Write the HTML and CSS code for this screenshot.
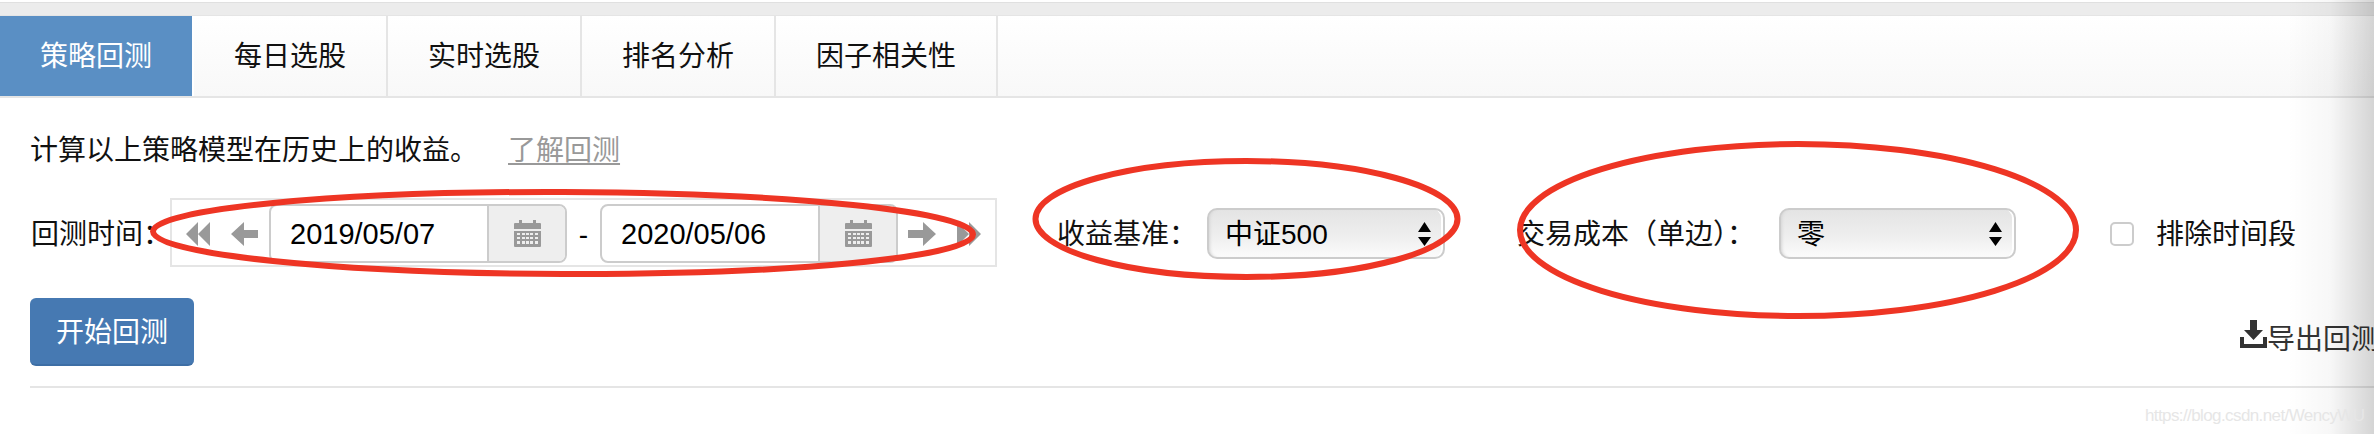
FILE: index.html
```html
<!DOCTYPE html>
<html lang="en">
<head>
    <meta charset="UTF-8">
    <meta name="viewport" content="width=device-width, initial-scale=1.0">
    <title>策略回测</title>
    <link rel="stylesheet" href="styles.css">
</head>
<body>
    <div class="top-strip"></div>
    <div class="tabs">
        <div class="tab active">策略回测</div>
        <div class="tab">每日选股</div>
        <div class="tab">实时选股</div>
        <div class="tab">排名分析</div>
        <div class="tab wide">因子相关性</div>
    </div>

    <div class="content">
        <div class="intro">计算以上策略模型在历史上的收益。<a class="learn-link" href="#">了解回测</a></div>

        <div class="form-row">
            <div class="field-label date-label">回测时间：</div>
            <div class="date-box">
                <svg class="nav-icon first" width="24" height="24" viewBox="0 0 24 24"><path d="M12 0V24L0 12ZM24 0V24L12 12Z"/></svg>
                <svg class="nav-icon second" width="27" height="24" viewBox="0 0 27 24"><path d="M13 0V8H27V16H13V24L0 12Z"/></svg>
                <div class="date-input">
                    <span class="date-value">2019/05/07</span>
                    <span class="date-addon">
                        <svg width="27" height="27" viewBox="0 0 27 27"><path d="M0 9V4Q0 3 1 3H5V0H8V3H19V0H22V3H26Q27 3 27 4V9ZM0 11H27V26Q27 27 26 27H1Q0 27 0 26ZM3 13V15H6V13ZM8 13V15H11V13ZM12 13V15H15V13ZM16 13V15H19V13ZM21 13V15H24V13ZM3 17V19H6V17ZM8 17V19H11V17ZM12 17V19H15V17ZM16 17V19H19V17ZM21 17V19H24V17ZM3 21V24H6V21ZM8 21V24H11V21ZM12 21V24H15V21ZM16 21V24H19V21ZM21 21V24H24V21Z" fill-rule="evenodd"/></svg>
                    </span>
                </div>
                <div class="date-dash">-</div>
                <div class="date-input">
                    <span class="date-value">2020/05/06</span>
                    <span class="date-addon">
                        <svg width="27" height="27" viewBox="0 0 27 27"><path d="M0 9V4Q0 3 1 3H5V0H8V3H19V0H22V3H26Q27 3 27 4V9ZM0 11H27V26Q27 27 26 27H1Q0 27 0 26ZM3 13V15H6V13ZM8 13V15H11V13ZM12 13V15H15V13ZM16 13V15H19V13ZM21 13V15H24V13ZM3 17V19H6V17ZM8 17V19H11V17ZM12 17V19H15V17ZM16 17V19H19V17ZM21 17V19H24V17ZM3 21V24H6V21ZM8 21V24H11V21ZM12 21V24H15V21ZM16 21V24H19V21ZM21 21V24H24V21Z" fill-rule="evenodd"/></svg>
                    </span>
                </div>
                <svg class="nav-icon third" width="28" height="24" viewBox="0 0 28 24"><path d="M15 0V8H0V16H15V24L28 12Z"/></svg>
                <svg class="nav-icon fourth" width="24" height="24" viewBox="0 0 24 24"><path d="M0 0V24L12 12ZM12 0V24L24 12Z"/></svg>
            </div>

            <div class="field-label benchmark-label">收益基准：</div>
            <div class="picker benchmark-picker">
                <span>中证500</span>
                <svg width="13" height="24" viewBox="0 0 13 24"><path d="M6.5 0L13 10H0ZM0 15H13L6.5 24Z"/></svg>
            </div>

            <div class="field-label cost-label">交易成本（单边）：</div>
            <div class="picker cost-picker">
                <span>零</span>
                <svg width="13" height="24" viewBox="0 0 13 24"><path d="M6.5 0L13 10H0ZM0 15H13L6.5 24Z"/></svg>
            </div>

            <div class="check-box"></div>
            <div class="field-label check-label">排除时间段</div>
        </div>

        <div class="action-row">
            <button class="start-button">开始回测</button>
            <div class="export-link">
                <svg width="27" height="28" viewBox="0 0 27 28"><path d="M10 0H17V10H23L13.5 20L4 10H10ZM0 17H4V24H23V17H27V28H0Z"/></svg>
                <span>导出回测</span>
            </div>
        </div>

        <div class="divider"></div>
    </div>

    <!-- hand drawn annotations on top of the screenshot -->
    <svg class="annotations" width="2374" height="434" viewBox="0 0 2374 434">
        <ellipse cx="563" cy="233" rx="410" ry="41" transform="rotate(0.2 563 233)"/>
        <ellipse cx="1246.5" cy="219" rx="211" ry="58"/>
        <ellipse cx="1798" cy="230" rx="278" ry="86"/>
    </svg>
    <div class="page-shade"></div>
    <div class="watermark">https://blog.csdn.net/WencyWU</div>
</body>
</html>
```

FILE: styles.css
```css
html, body {
    margin: 0;
    padding: 0;
}
body {
    position: relative;
    width: 2374px;
    height: 434px;
    overflow: hidden;
    padding-top: 2px;
    box-sizing: border-box;
    background-color: #fff;
    color: #111;
    font-family: "Liberation Sans", "Noto Sans CJK SC", sans-serif;
    font-size: 28px;
    line-height: 40px;
}
.top-strip {
    height: 12px;
    background-color: #ececec;
    border-top: 1px solid #e0e0e0;
    border-bottom: 1px solid #e5e5e5;
}
.tabs {
    display: flex;
    height: 80px;
    background: linear-gradient(#fff, #f8f8f8);
    border-bottom: 2px solid #e5e5e5;
}
.tab {
    width: 192px;
    display: flex;
    justify-content: center;
    align-items: center;
    padding-top: 2px;
    box-sizing: content-box;
    border-right: 2px solid #e5e5e5;
}
.tab.wide {
    width: 220px;
}
.tab.active {
    background-color: #5a8fc4;
    color: #fff;
    border-right-color: #fff;
}
.content {
    width: 2390px;
    padding: 33px 0 0 30px;
    box-sizing: border-box;
}
.learn-link {
    margin-left: 30px;
    color: #999;
    text-decoration: underline;
    text-underline-offset: 3px;
}
.form-row {
    display: flex;
    align-items: center;
    margin-top: 27px;
    height: 69px;
}
.field-label {
    padding-top: 5px;
    white-space: nowrap;
}
.date-label {
    width: 139px;
    margin-left: 1px;
}
.date-box {
    display: flex;
    align-items: center;
    width: 827px;
    height: 69px;
    padding-top: 2px;
    box-sizing: border-box;
    border: 2px solid #e5e5e5;
}
.nav-icon {
    flex: none;
    fill: #999;
}
.nav-icon.first {
    margin-left: 14px;
}
.nav-icon.second {
    margin: 0 11px 0 21px;
}
.nav-icon.third {
    margin: 0 21px 0 10px;
}
.date-input {
    display: flex;
    width: 298px;
    height: 59px;
    box-sizing: border-box;
    border: 2px solid #ccc;
    border-radius: 8px;
    overflow: hidden;
}
.date-value {
    flex: 1;
    padding-left: 19px;
    font-size: 29px;
    line-height: 57px;
    color: #000;
}
.date-addon {
    display: flex;
    justify-content: center;
    align-items: center;
    width: 76px;
    background-color: #eee;
    border-left: 2px solid #ccc;
    fill: #999;
}
.date-dash {
    width: 33px;
    padding-top: 2px;
    text-align: center;
    color: #000;
}
.benchmark-label {
    width: 150px;
    margin-left: 60px;
}
.cost-label {
    width: 262px;
    margin-left: 72px;
}
.picker {
    display: flex;
    justify-content: space-between;
    align-items: center;
    height: 51px;
    margin-top: 2px;
    padding: 0 12px 0 16px;
    box-sizing: border-box;
    border: 2px solid #ccc;
    border-radius: 10px;
    background: linear-gradient(#e4e4e4, #eee 55%, #fbfbfb);
    box-shadow: inset 3px 0 3px -2px #d5d5d5, inset -3px 0 0 -1px #fff;
    color: #000;
}
.picker span {
    padding-top: 2px;
}
.benchmark-picker {
    width: 238px;
}
.cost-picker {
    width: 237px;
}
.check-box {
    width: 24px;
    height: 24px;
    margin: 2px 22px 0 94px;
    box-sizing: border-box;
    border: 2px solid #ccc;
    border-radius: 5px;
}
.action-row {
    display: flex;
    justify-content: space-between;
    align-items: flex-start;
    margin-top: 31px;
}
.start-button {
    width: 164px;
    height: 68px;
    padding: 4px 0 0;
    border: none;
    border-bottom: 2px solid #3d6ea5;
    border-radius: 6px;
    background-color: #4679b2;
    color: #fff;
    font: inherit;
}
.export-link {
    display: flex;
    align-items: flex-start;
    width: 150px;
    margin-top: 22px;
    color: #333;
    fill: #333;
}
.export-link span {
    white-space: nowrap;
}
.divider {
    height: 2px;
    margin-top: 20px;
    background-color: #e5e5e5;
}
.annotations {
    position: absolute;
    top: 0;
    left: 0;
    fill: none;
    stroke: #ee3524;
    stroke-width: 6;
}
.page-shade {
    position: absolute;
    top: 0;
    right: 0;
    bottom: 0;
    width: 87px;
    background: linear-gradient(to right, rgba(0, 0, 0, 0), rgba(0, 0, 0, 0.03) 50%, rgba(0, 0, 0, 0.17));
}
.watermark {
    position: absolute;
    top: 404px;
    left: 2145px;
    color: #e6e6e6;
    font-size: 17px;
    letter-spacing: -0.6px;
    line-height: 24px;
    white-space: nowrap;
}
```
